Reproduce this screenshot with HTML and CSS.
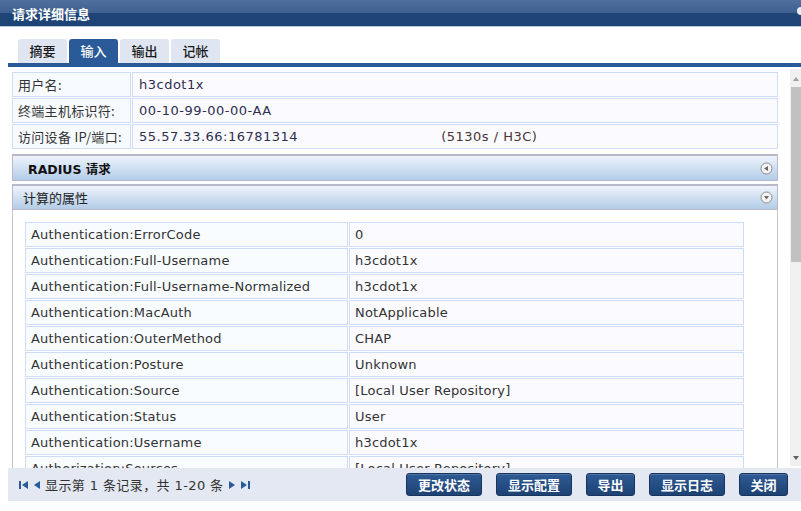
FILE: index.html
```html
<!DOCTYPE html>
<html lang="zh-CN">
<head>
    <meta charset="UTF-8">
    <title>请求详细信息</title>
    <link rel="stylesheet" href="styles.css">
</head>
<body>
    <div class="titlebar">
        <span class="title">请求详细信息</span>
        <span class="close-dot"></span>
    </div>

    <div class="tabs">
        <div class="tab">摘要</div>
        <div class="tab active">输入</div>
        <div class="tab">输出</div>
        <div class="tab">记帐</div>
    </div>
    <div class="tabline"></div>

    <div class="main">
        <div class="content">
            <table class="info">
                <tr><td class="lbl">用户名:</td><td>h3cdot1x</td></tr>
                <tr><td class="lbl">终端主机标识符:</td><td>00-10-99-00-00-AA</td></tr>
                <tr><td class="lbl">访问设备 IP/端口:</td><td>55.57.33.66:16781314<span class="dev">(5130s / H3C)</span></td></tr>
            </table>

            <div class="section-head bold">
                <span>RADIUS 请求</span>
                <svg class="toggle" width="13" height="13" viewBox="0 0 13 13">
                    <circle cx="6.5" cy="6.5" r="5.5" fill="#f4f4f4" stroke="#8a8a8a" stroke-width="1"/>
                    <polygon points="4,6.5 8,4 8,9" fill="#666"/>
                </svg>
            </div>

            <div class="section-head open">
                <span>计算的属性</span>
                <svg class="toggle" width="13" height="13" viewBox="0 0 13 13">
                    <circle cx="6.5" cy="6.5" r="5.5" fill="#f4f4f4" stroke="#8a8a8a" stroke-width="1"/>
                    <polygon points="4,5 9,5 6.5,8.5" fill="#666"/>
                </svg>
            </div>
            <div class="section-body">
                <table class="attrs">
                    <tr><td class="lbl">Authentication:ErrorCode</td><td>0</td></tr>
                    <tr><td class="lbl">Authentication:Full-Username</td><td>h3cdot1x</td></tr>
                    <tr><td class="lbl">Authentication:Full-Username-Normalized</td><td>h3cdot1x</td></tr>
                    <tr><td class="lbl">Authentication:MacAuth</td><td>NotApplicable</td></tr>
                    <tr><td class="lbl">Authentication:OuterMethod</td><td>CHAP</td></tr>
                    <tr><td class="lbl">Authentication:Posture</td><td>Unknown</td></tr>
                    <tr><td class="lbl">Authentication:Source</td><td>[Local User Repository]</td></tr>
                    <tr><td class="lbl">Authentication:Status</td><td>User</td></tr>
                    <tr><td class="lbl">Authentication:Username</td><td>h3cdot1x</td></tr>
                    <tr><td class="lbl">Authorization:Sources</td><td>[Local User Repository]</td></tr>
                    <tr><td class="lbl">Connection:AP-Name</td><td>55.57.33.66</td></tr>
                </table>
            </div>
        </div>
        <div class="scrollbar">
            <div class="arrow up"></div>
            <div class="thumb"></div>
            <div class="arrow down"></div>
        </div>
    </div>

    <div class="footer">
        <div class="pager">
            <svg width="11" height="10" viewBox="0 0 11 10"><rect x="1" y="1" width="2" height="8" fill="#2a5a98"/><polygon points="10,1 10,9 4,5" fill="#2a5a98"/></svg>
            <svg width="9" height="10" viewBox="0 0 9 10"><polygon points="8,1 8,9 2,5" fill="#2a5a98"/></svg>
            <span class="pager-text">显示第 1 条记录，共 1-20 条</span>
            <svg width="9" height="10" viewBox="0 0 9 10"><polygon points="1,1 1,9 7,5" fill="#2a5a98"/></svg>
            <svg width="11" height="10" viewBox="0 0 11 10"><polygon points="1,1 1,9 7,5" fill="#2a5a98"/><rect x="8" y="1" width="2" height="8" fill="#2a5a98"/></svg>
        </div>
        <div class="buttons">
            <button class="btn w4">更改状态</button>
            <button class="btn w4">显示配置</button>
            <button class="btn w2">导出</button>
            <button class="btn w4">显示日志</button>
            <button class="btn w2">关闭</button>
        </div>
    </div>
</body>
</html>
```

FILE: styles.css
```css
body {
    margin: 0;
    background-color: #ffffff;
    font-family: "DejaVu Sans", "Noto Sans CJK SC", sans-serif;
    font-size: 13px;
    color: #333333;
    width: 801px;
    overflow: hidden;
}

/* title bar */
.titlebar {
    height: 27px;
    display: flex;
    align-items: center;
    justify-content: space-between;
    padding-left: 12px;
    background: linear-gradient(#50709e 0%, #3f5f8f 50%, #1f4577 52%, #1e4476 100%);
    border-bottom: 1px solid #b8c8dc;
    box-sizing: border-box;
}

.title {
    color: #ffffff;
    font-family: "Noto Sans CJK SC", sans-serif;
    font-weight: bold;
    font-size: 13px;
}

.close-dot {
    width: 8px;
    height: 8px;
    border-radius: 50%;
    background-color: #e8eef6;
    margin-right: -4px;
    margin-top: -4px;
}

/* tabs */
.tabs {
    display: flex;
    gap: 2px;
    padding: 12px 0 0 18px;
}

.tab {
    width: 49px;
    height: 24px;
    line-height: 24px;
    text-align: center;
    background-color: #dfe6f2;
    border-radius: 3px 3px 0 0;
    font-family: "Noto Sans CJK SC", sans-serif;
    font-size: 13px;
    font-weight: 500;
    color: #1a1a1a;
}

.tab.active {
    background-color: #2a5a98;
    color: #ffffff;
}

.tabline {
    height: 4px;
    margin-left: 8px;
    background-color: #2a5a98;
}

/* scroll area */
.main {
    display: flex;
    margin-left: 8px;
    height: 401px;
    overflow: hidden;
}

.content {
    flex: 1;
    padding: 5px 12px 0 4px;
    overflow: hidden;
}

table {
    border-collapse: separate;
    border-spacing: 1px;
    width: 100%;
}

td {
    border: 1px solid #cfdcf6;
    background-color: #fbfbff;
    padding: 0 6px;
    white-space: nowrap;
}

.info {
    margin: -1px 0 0 -1px;
    width: calc(100% + 2px);
}

.info td {
    height: 23px;
    font-size: 13px;
    letter-spacing: 0.5px;
    color: #2e2e50;
}

.info td.lbl {
    width: 106px;
    color: #333333;
    font-family: "Noto Sans CJK SC", sans-serif;
    font-size: 13px;
    letter-spacing: 0.3px;
    padding-left: 5px;
    background-color: #f7fbff;
}

.dev {
    margin-left: 143px;
    color: #4a3434;
}

/* section headers */
.section-head {
    height: 24px;
    display: flex;
    align-items: center;
    justify-content: space-between;
    padding: 0 4px 0 10px;
    border: 1px solid #b8b8c8;
    border-top-width: 2px;
    background: linear-gradient(#eef4fc, #b3cce8);
    font-family: "Noto Sans CJK SC", sans-serif;
    font-size: 13px;
    color: #222222;
}

.section-head.bold {
    margin-top: 4px;
    padding-left: 15px;
    font-weight: bold;
    color: #111111;
}

.section-head.bold span {
    font-family: "DejaVu Sans", "Noto Sans CJK SC", sans-serif;
    font-size: 12.5px;
}

.section-head.open {
    margin-top: 3px;
    height: 23px;
}

.section-body {
    border-left: 1px solid #c4c4c4;
    border-right: 1px solid #c4c4c4;
    padding: 11px 31px 0 12px;
}

.attrs {
    margin-left: -1px;
}

.attrs td {
    height: 23px;
    font-size: 13px;
    letter-spacing: 0.2px;
    color: #333333;
    padding-left: 5px;
}

.attrs td.lbl {
    width: 310px;
    background-color: #f8fcff;
}

/* fake scrollbar */
.scrollbar {
    width: 11px;
    background-color: #f0f0f0;
    position: relative;
    margin-top: 2px;
    margin-bottom: 2px;
}

.thumb {
    position: absolute;
    left: 1px;
    right: 0;
    top: 18px;
    height: 175px;
    background-color: #c1c1c1;
}

.arrow {
    position: absolute;
    left: 3px;
    width: 0;
    height: 0;
    border-left: 3px solid transparent;
    border-right: 3px solid transparent;
}

.arrow.up {
    top: 8px;
    border-bottom: 4px solid #a0a0a0;
}

.arrow.down {
    bottom: 6px;
    border-top: 4px solid #606060;
}

/* footer */
.footer {
    margin-left: 8px;
    height: 33px;
    background-color: #e3e8f2;
    display: flex;
    align-items: center;
    justify-content: space-between;
    padding: 0 13px 0 10px;
}

.pager {
    display: flex;
    align-items: center;
    gap: 3px;
}

.pager-text {
    font-family: "DejaVu Sans", "Noto Sans CJK SC", sans-serif;
    font-size: 13px;
    letter-spacing: 0.4px;
    color: #333333;
    margin: 0 1px 0 1px;
}

.buttons {
    display: flex;
    gap: 14px;
}

.btn {
    height: 23px;
    padding: 0;
    border: 1px solid #18335e;
    border-radius: 3px;
    background: linear-gradient(#2e5a94, #1d4274);
    color: #ffffff;
    font-family: "Noto Sans CJK SC", sans-serif;
    font-weight: bold;
    font-size: 13px;
    box-shadow: inset 0 1px 0 rgba(255, 255, 255, 0.15);
}

.btn.w4 {
    width: 76px;
}

.btn.w2 {
    width: 49px;
}
```
